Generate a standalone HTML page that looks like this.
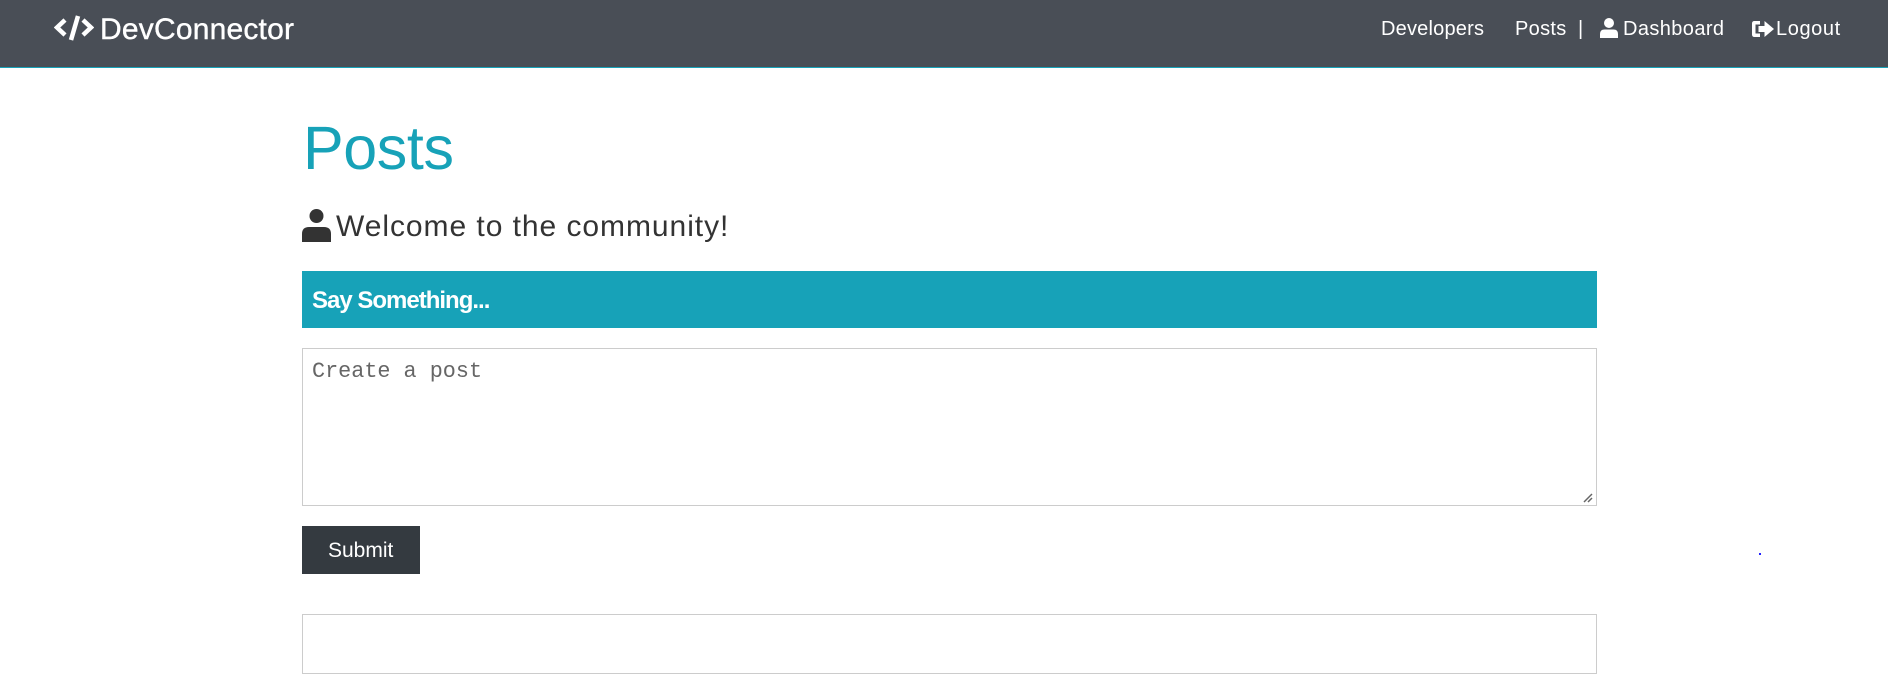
<!DOCTYPE html>
<html><head><meta charset="utf-8"><style>
*{box-sizing:border-box;margin:0;padding:0}
body{width:1888px;height:640px;overflow:hidden;background:#fff;font-family:"Liberation Sans",sans-serif;color:#333;position:relative}
.nav{position:absolute;left:0;top:0;width:1888px;height:68px;background:#494e56;border-bottom:1px solid #17a2b8}
.t{position:absolute;white-space:nowrap}
.nl{color:#fff;font-size:20px;top:18px}
</style></head><body>
<div class="nav">
<svg class="t" style="left:54px;top:15px" width="40" height="26" viewBox="0 0 40 26">
<path d="M11 5 L3 12.5 L11 20" fill="none" stroke="#fff" stroke-width="4.5" stroke-linejoin="miter"/>
<path d="M24 1 L17 25" fill="none" stroke="#fff" stroke-width="4.5"/>
<path d="M29 5 L37 12.5 L29 20" fill="none" stroke="#fff" stroke-width="4.5"/>
</svg>
<div class="t" style="left:100px;top:13px;color:#fff;font-size:30px;letter-spacing:0.2px;-webkit-text-stroke:0.4px #fff">DevConnector</div>
<div class="t nl" style="left:1381px;letter-spacing:0.2px">Developers</div>
<div class="t nl" style="left:1515px;letter-spacing:0.3px">Posts</div>
<div class="t nl" style="left:1578px">|</div>
<svg class="t" style="left:1600px;top:18px" width="18" height="20" viewBox="0 0 18 20"><circle cx="9" cy="5" r="5" fill="#fff"/><path d="M0 20 V16 Q0 11.5 4.5 11.5 H13.5 Q18 11.5 18 16 V20Z" fill="#fff"/></svg>
<div class="t nl" style="left:1623px;letter-spacing:0.4px">Dashboard</div>
<svg class="t" style="left:1752px;top:21px" width="22" height="16" viewBox="0 0 22 16"><path d="M8 0 H2.5 Q0 0 0 2.5 V13.5 Q0 16 2.5 16 H8 V12.5 H3.5 V3.5 H8Z" fill="#fff"/><path d="M6.5 5 H12.5 V0 L22 8 L12.5 16 V11 H6.5Z" fill="#fff"/></svg>
<div class="t nl" style="left:1776px;letter-spacing:0.6px">Logout</div>
</div>
<div class="t" style="left:303px;top:113px;font-size:61px;color:#17a2b8;letter-spacing:-0.4px">Posts</div>
<svg class="t" style="left:302px;top:209px" width="30" height="33" viewBox="0 0 30 33"><circle cx="14.5" cy="7" r="7" fill="#333"/><path d="M0 33 V25 Q0 18 7 18 H22 Q29 18 29 25 V33Z" fill="#333"/></svg>
<div class="t" style="left:336px;top:210px;font-size:30px;color:#333;letter-spacing:0.95px">Welcome to the community!</div>
<div class="t" style="left:302px;top:271px;width:1295px;height:57px;background:#17a2b8"></div>
<div class="t" style="left:312px;top:287px;font-size:24px;font-weight:bold;color:#fff;letter-spacing:-1px">Say Something...</div>
<div class="t" style="left:302px;top:348px;width:1295px;height:158px;border:1px solid #ccc"></div>
<div class="t" style="left:312px;top:359px;font-family:'Liberation Mono',monospace;font-size:21.8px;color:#666">Create a post</div>
<svg class="t" style="left:1583px;top:493px" width="10" height="10"><path d="M1 9 L9 1 M5 9 L9 5" stroke="#666" stroke-width="1.5"/></svg>
<div class="t" style="left:302px;top:526px;width:118px;height:48px;background:#343a40"></div>
<div class="t" style="left:328px;top:539px;font-size:21px;color:#fff">Submit</div>
<div class="t" style="left:1759px;top:553px;width:2px;height:2px;background:#22f"></div>
<div class="t" style="left:302px;top:614px;width:1295px;height:60px;border:1px solid #ccc"></div>
</body></html>
